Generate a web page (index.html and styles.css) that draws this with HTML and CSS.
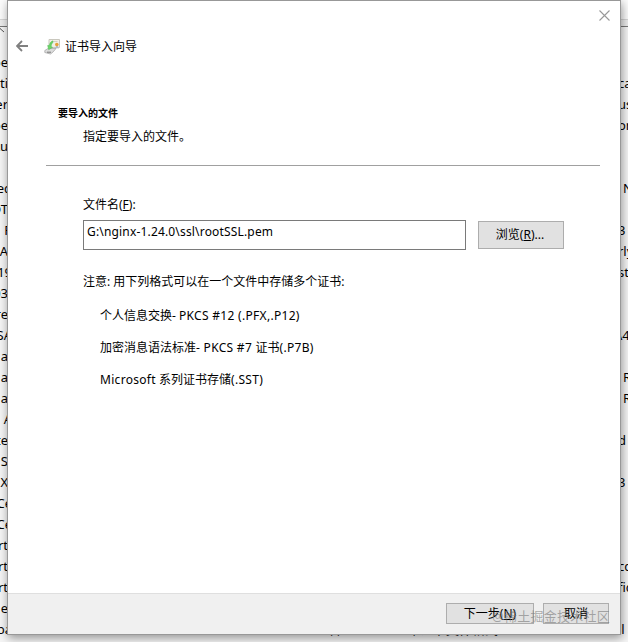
FILE: index.html
```html
<!DOCTYPE html>
<html lang="zh-CN">
<head>
  <meta charset="UTF-8">
  <meta name="viewport" content="width=device-width, initial-scale=1.0">
  <title>证书导入向导</title>
  <link rel="stylesheet" href="styles.css">
</head>
<body>
  <!-- editor window behind the wizard -->
  <div class="editor">
    <div class="editor-top"></div>
    <div class="ruler"></div>
    <div class="editor-body">
      <div class="lines left">
        <span>be</span><span>nti</span><span>er</span><span>be</span><span>Au</span><span></span><span class="cut">ed</span>
        <span>OT</span><span class="cut">P</span><span>A</span><span class="cut">19</span><span>03</span><span>re</span><span class="cut">SA</span>
        <span>a</span><span>a</span><span>a</span><span class="cut">A</span><span>te</span><span>S</span><span>X</span>
        <span class="cut">Ce</span><span class="cut">Ce</span><span>ert</span><span>rt</span><span>rt</span><span>e</span><span class="cut">ba</span>
      </div>
      <div class="lines middle"><span>, ,</span><span>m, 证书文件格式</span></div>
      <div class="lines right">
        <span></span><span>ca</span><span>us</span><span>or</span><span></span><span></span><span class="in">N</span>
        <span></span><span>3</span><span>rly</span><span>st</span><span></span><span></span><span class="under">A4</span>
        <span></span><span class="in">R</span><span class="in">R</span><span></span><span>d</span><span></span><span>3</span>
        <span></span><span></span><span></span><span>cc</span><span>fic</span><span></span><span class="under">al</span>
      </div>
    </div>
    <svg class="caret" width="8" height="8" viewBox="0 0 8 8"><path d="M-3 6L0 2.5L4 6" fill="none" stroke="#555"/></svg>
  </div>

  <div class="wizard">
    <div class="titlebar">
      <svg class="close" width="11" height="11" viewBox="0 0 11 11"><path d="M.5 .5L10.5 10.5M10.5 .5L.5 10.5" stroke="#999" stroke-width="1.1"/></svg>
    </div>
    <div class="caption">
      <svg class="back" width="13" height="12" viewBox="0 0 13 12"><path d="M1 6H12M6 1L1 6L6 11" fill="none" stroke="#808080" stroke-width="1.8"/></svg>
      <svg class="cert" width="17" height="17" viewBox="0 0 17 17">
        <path d="M5 1.5H15.5V9.5H5Z" fill="#f1efe6" stroke="#c9c7bd"/>
        <path d="M7.5 3.5H13.5" stroke="#d2d0c7"/>
        <path d="M12 7.5L11.5 11L13 10L14.5 11L14 7.5Z" fill="#aebccc"/>
        <circle cx="12.8" cy="6.5" r="1.8" fill="#e4a13b"/>
        <path d="M.8 12.5L4 10.5H12L9 14L6.5 16L.8 14.5Z" fill="#dcdcdc" stroke="#a0a0a0" stroke-width=".7"/>
        <path d="M3 14.2H7" stroke="#777"/>
        <path d="M8.8 2.8Q5.4 4.3 5.3 7.5H3.6L4.7 11.8L8.6 9.3L7.1 8.4Q7.2 6 9 4.2Z" fill="#6ad468" stroke="#45b54a" stroke-width=".4"/>
      </svg>
      <span>证书导入向导</span>
    </div>

    <div class="header">
      <h1>要导入的文件</h1>
      <p>指定要导入的文件。</p>
    </div>

    <div class="content">
      <label for="file">文件名(<u>F</u>):</label>
      <div class="file-row">
        <input id="file" type="text" value="G:\nginx-1.24.0\ssl\rootSSL.pem">
        <button class="browse">浏览(<u>R</u>)...</button>
      </div>
      <p class="note">注意: 用下列格式可以在一个文件中存储多个证书:</p>
      <ul>
        <li>个人信息交换- <span class="latin">PKCS #12 (.PFX,.P12)</span></li>
        <li>加密消息语法标准<span class="latin">- PKCS #7 </span>证书<span class="latin">(.P7B)</span></li>
        <li><span class="latin">Microsoft</span> 系列证书存储<span class="latin">(.SST)</span></li>
      </ul>
    </div>

    <div class="footer">
      <button class="next">下一步(<u>N</u>)</button>
      <button class="cancel">取消</button>
    </div>
  </div>

  <div class="watermark">@稀土掘金技术社区</div>
</body>
</html>
```

FILE: styles.css
```css
* {
  box-sizing: border-box;
}
body {
  margin: 0;
  width: 628px;
  height: 642px;
  overflow: hidden;
  position: relative;
  font-family: "Noto Sans", "Noto Sans CJK SC", sans-serif;
  font-size: 12px;
  color: #000;
}

/* editor behind */
.editor {
  height: 642px;
  display: flex;
  flex-direction: column;
  background: #f5f5f5;
  overflow: hidden;
}
.editor-top {
  height: 19px;
  flex: none;
  background: #fbfbfb;
}
.ruler {
  height: 8px;
  flex: none;
  background: #ececec;
  border-top: 1px solid #d5d5d5;
  border-bottom: 1px solid #777;
}
.editor-body {
  flex: 1;
  display: flex;
  justify-content: space-between;
  padding-top: 25px;
}
.lines {
  display: flex;
  flex-direction: column;
  font-size: 13px;
}
.lines span {
  height: 21px;
  line-height: 21px;
  white-space: nowrap;
}
.left {
  width: 8px;
  align-items: flex-end;
}
/* runs on under the dialog */
.left .cut {
  margin-right: -4px;
}
.right {
  width: 10px;
}
.right .in {
  padding-left: 5px;
}
.right .under {
  margin-left: -4px;
}
.lines.middle {
  flex-direction: row;
  gap: 60px;
  margin: 567px 0 0 215px;
  width: 180px;
  color: #222;
}
.caret {
  position: absolute;
  left: 0;
  top: 26px;
}

/* dialog */
.wizard {
  position: absolute;
  left: 7px;
  top: 0;
  width: 614px;
  height: 635px;
  display: flex;
  flex-direction: column;
  background: #fff;
  border: 1px solid #989898;
  box-shadow: 1px 3px 9px rgba(0, 0, 0, 0.4);
}
.titlebar {
  height: 30px;
  display: flex;
  justify-content: flex-end;
  padding: 9px 10px 0 0;
}
.caption {
  height: 30px;
  display: flex;
  align-items: center;
  padding-left: 8px;
}
.cert {
  margin: 0 4px 0 15px;
}
.header {
  height: 105px;
  margin: 0 20px 0 38px;
  padding: 44px 0 0 12px;
  border-bottom: 1px solid #a0a0a0;
}
.header h1 {
  margin: 0;
  font-size: 10px;
  line-height: 16px;
}
.header p {
  margin: 7px 0 0 25px;
  line-height: 18px;
}
.content {
  flex: 1;
  padding: 30px 56px 0 75px;
}
.content label {
  display: block;
  line-height: 18px;
}
.file-row {
  display: flex;
  align-items: center;
  gap: 12px;
  margin-top: 6px;
}
.file-row input {
  width: 383px;
  height: 30px;
  padding: 0 3px 8px;
  border: 1px solid #7a7a7a;
  background: #fff;
  font: inherit;
  letter-spacing: 0.17px;
  outline: none;
}
.latin {
  letter-spacing: 0.3px;
}
button {
  padding: 0;
  border: 1px solid #adadad;
  background: #e1e1e1;
  color: #000;
  font: inherit;
}
.browse {
  width: 86px;
  height: 28px;
  padding: 0 2px 2px 0;
}
.note {
  margin: 23px 0 0;
  line-height: 18px;
}
ul {
  margin: 9px 0 0 17px;
  padding: 0;
  list-style: none;
}
li {
  height: 32px;
  line-height: 32px;
}
.footer {
  height: 41px;
  display: flex;
  justify-content: flex-end;
  gap: 9px;
  padding: 9px 11px 0 0;
  background: #f0f0f0;
  border-top: 1px solid #dfdfdf;
}
.footer button {
  height: 21px;
  line-height: 19px;
}
.next {
  width: 88px;
}
.cancel {
  width: 66px;
}
.watermark {
  position: absolute;
  left: 492px;
  top: 606px;
  font-size: 13px;
  letter-spacing: 0.25px;
  line-height: 20px;
  white-space: nowrap;
  color: rgba(120, 120, 120, 0.6);
}
```
